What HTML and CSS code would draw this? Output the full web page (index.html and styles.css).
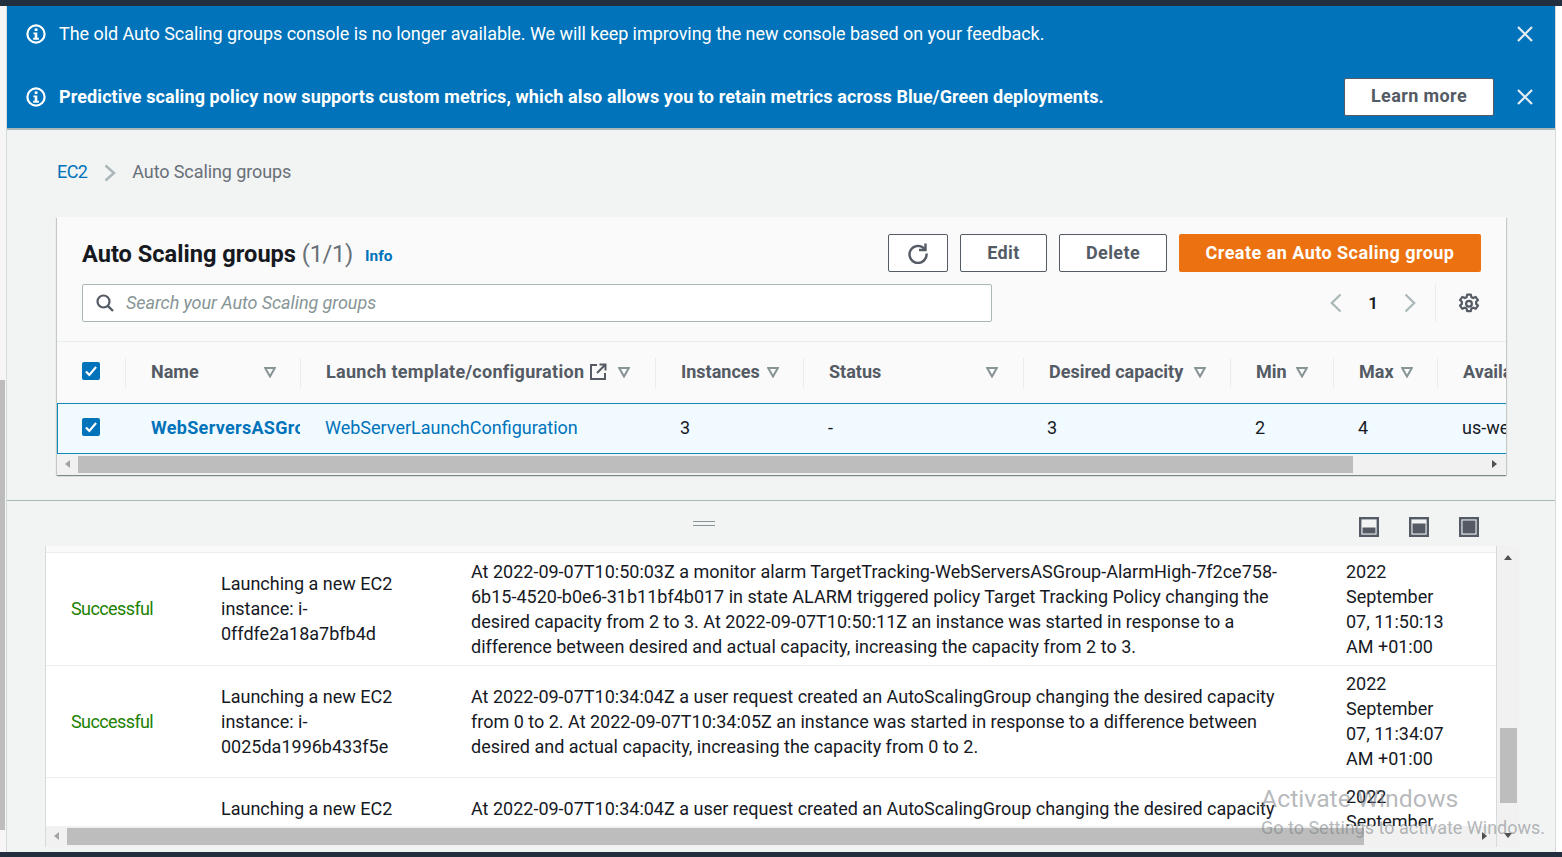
FILE: index.html
```html
<!DOCTYPE html>
<html lang="en">
<head>
<meta charset="utf-8">
<title>Auto Scaling groups</title>
<link rel="stylesheet" href="styles.css">
</head>
<body>
<div class="topbar"></div>
<div class="shell">
  <div class="gutter"><div class="gutter-thumb"></div></div>
  <main class="main">
    <section class="flash">
      <div class="flash-row">
        <svg class="info-icon" viewBox="0 0 20 20"><circle cx="10" cy="10" r="8.6" fill="none" stroke="#fff" stroke-width="2.2"/><rect x="8.7" y="4.4" width="2.8" height="2.6" fill="#fff"/><path d="M7.4 8.4h3.9v5.4h1.6v1.9H7.2v-1.9h1.5v-3.5H7.400z" fill="#fff"/></svg>
        <span class="flash-text">The old Auto Scaling groups console is no longer available. We will keep improving the new console based on your feedback.</span>
        <svg class="close-icon" viewBox="0 0 18 18"><path d="M2 2l14 14M16 2L2 16" stroke="#e6edf2" stroke-width="2.2" fill="none"/></svg>
      </div>
      <div class="flash-row">
        <svg class="info-icon" viewBox="0 0 20 20"><circle cx="10" cy="10" r="8.6" fill="none" stroke="#fff" stroke-width="2.2"/><rect x="8.7" y="4.4" width="2.8" height="2.6" fill="#fff"/><path d="M7.4 8.4h3.9v5.4h1.6v1.9H7.2v-1.9h1.5v-3.5H7.400z" fill="#fff"/></svg>
        <span class="flash-text flash-strong">Predictive scaling policy now supports custom metrics, which also allows you to retain metrics across Blue/Green deployments.</span>
        <button class="learn-btn">Learn more</button>
        <svg class="close-icon" viewBox="0 0 18 18"><path d="M2 2l14 14M16 2L2 16" stroke="#e6edf2" stroke-width="2.2" fill="none"/></svg>
      </div>
    </section>

    <nav class="crumbs">
      <a class="crumb-link">EC2</a>
      <svg class="crumb-sep" viewBox="0 0 12 18"><path d="M1.5 1.5L10 9l-8.500 7.500" fill="none" stroke="#aab7b8" stroke-width="2.400"/></svg>
      <span class="crumb-current">Auto Scaling groups</span>
    </nav>

    <section class="card">
      <div class="card-head">
        <div class="title-row">
          <h1 class="title">Auto Scaling groups <span class="count">(1/1)</span></h1>
          <a class="info-link">Info</a>
          <div class="actions">
            <button class="btn btn-icon"><svg class="refresh" viewBox="0 0 22 22"><path d="M17.600 7A8.500 8.500 0 1 0 19.500 11.500" fill="none" stroke="#545b64" stroke-width="2.400"/><path d="M18.500 1.500V8h-6.500" fill="none" stroke="#545b64" stroke-width="2.400"/></svg></button>
            <button class="btn btn-edit">Edit</button>
            <button class="btn btn-delete">Delete</button>
            <button class="btn-primary">Create an Auto Scaling group</button>
          </div>
        </div>
        <div class="search-row">
          <div class="search">
            <svg class="search-icon" viewBox="0 0 18 18"><circle cx="7.500" cy="7.500" r="6" fill="none" stroke="#545b64" stroke-width="2.200"/><path d="M11.800 11.800L17 17" stroke="#545b64" stroke-width="2.400"/></svg>
            <span class="placeholder">Search your Auto Scaling groups</span>
          </div>
          <div class="pager">
            <svg class="pager-chev" viewBox="0 0 12 20"><path d="M10.500 1.500L1.800 10l8.700 8.500" fill="none" stroke="#aab7b8" stroke-width="2.200"/></svg>
            <span class="page-num">1</span>
            <svg class="pager-chev" viewBox="0 0 12 20"><path d="M1.500 1.500L10.200 10l-8.700 8.500" fill="none" stroke="#aab7b8" stroke-width="2.200"/></svg>
            <span class="pager-divider"></span>
            <svg class="gear" viewBox="0 0 20 20"><path d="M8.300 1.500h3.400l.5 2.300 1.700.8 2.100-1.100 2.200 2.900-1.700 1.600v1.900l1.700 1.600-2.200 2.900-2.100-1.100-1.700.8-.5 2.300H8.300l-.5-2.300-1.700-.8-2.100 1.100-2.200-2.900 1.700-1.600V8l-1.700-1.600 2.200-2.900 2.100 1.100 1.700-.8z" fill="none" stroke="#545b64" stroke-width="2" stroke-linejoin="round"/><circle cx="10" cy="9.800" r="2.600" fill="none" stroke="#545b64" stroke-width="2"/></svg>
          </div>
        </div>
      </div>

      <div class="grid grid-head">
        <div class="cell cell-check"><span class="checkbox"><svg viewBox="0 0 16 16"><path d="M3.500 8.500l3 3 6-7" fill="none" stroke="#fff" stroke-width="2"/></svg></span></div>
        <div class="cell th"><span>Name</span><svg class="caret caret-name" viewBox="0 0 12 11"><path d="M1.200 1h9.600L6 9.500z" fill="none" stroke="#879596" stroke-width="2"/></svg></div>
        <div class="cell th"><span class="th-wide">Launch template/configuration</span><svg class="ext" viewBox="0 0 18 18"><path d="M8 2H2v14h14v-6" fill="none" stroke="#545b64" stroke-width="2"/><path d="M10.500 1.500h6v6M16 2L8 10" fill="none" stroke="#545b64" stroke-width="2"/></svg><svg class="caret caret-gap" viewBox="0 0 12 11"><path d="M1.200 1h9.600L6 9.500z" fill="none" stroke="#879596" stroke-width="2"/></svg></div>
        <div class="cell th"><span>Instances</span><svg class="caret caret-nearest" viewBox="0 0 12 11"><path d="M1.200 1h9.600L6 9.500z" fill="none" stroke="#879596" stroke-width="2"/></svg></div>
        <div class="cell th"><span>Status</span><svg class="caret caret-status" viewBox="0 0 12 11"><path d="M1.200 1h9.600L6 9.500z" fill="none" stroke="#879596" stroke-width="2"/></svg></div>
        <div class="cell th"><span>Desired capacity</span><svg class="caret caret-gap" viewBox="0 0 12 11"><path d="M1.200 1h9.600L6 9.500z" fill="none" stroke="#879596" stroke-width="2"/></svg></div>
        <div class="cell th"><span>Min</span><svg class="caret caret-near" viewBox="0 0 12 11"><path d="M1.200 1h9.600L6 9.500z" fill="none" stroke="#879596" stroke-width="2"/></svg></div>
        <div class="cell th"><span>Max</span><svg class="caret caret-nearest" viewBox="0 0 12 11"><path d="M1.200 1h9.600L6 9.500z" fill="none" stroke="#879596" stroke-width="2"/></svg></div>
        <div class="cell th"><span>Availability Zones</span></div>
      </div>

      <div class="grid grid-row">
        <div class="cell cell-check"><span class="checkbox"><svg viewBox="0 0 16 16"><path d="M3.500 8.500l3 3 6-7" fill="none" stroke="#fff" stroke-width="2"/></svg></span></div>
        <div class="cell td td-name"><a class="name-link">WebServersASGroup</a></div>
        <div class="cell td"><a class="cfg-link">WebServerLaunchConfiguration</a></div>
        <div class="cell td">3</div>
        <div class="cell td">-</div>
        <div class="cell td">3</div>
        <div class="cell td">2</div>
        <div class="cell td">4</div>
        <div class="cell td">us-west-2a</div>
      </div>

      <div class="hscroll">
        <span class="arrow arrow-left"></span>
        <span class="hthumb"></span>
        <span class="arrow arrow-right"></span>
      </div>
    </section>

    <section class="split">
      <div class="split-bar">
        <span class="handle"></span>
        <div class="split-icons">
          <svg class="pane-icon" viewBox="0 0 20 20"><rect x="1.200" y="1.200" width="17.600" height="17.600" fill="none" stroke="#545b64" stroke-width="2.400"/><rect x="3.500" y="10.500" width="13" height="6" fill="#545b64"/></svg>
          <svg class="pane-icon" viewBox="0 0 20 20"><rect x="1.200" y="1.200" width="17.600" height="17.600" fill="none" stroke="#545b64" stroke-width="2.400"/><rect x="3.500" y="6.500" width="13" height="10" fill="#545b64"/></svg>
          <svg class="pane-icon" viewBox="0 0 20 20"><rect x="1.200" y="1.200" width="17.600" height="17.600" fill="none" stroke="#545b64" stroke-width="2.400"/><rect x="3.500" y="3.500" width="13" height="13" fill="#545b64"/></svg>
        </div>
      </div>

      <div class="activity">
        <div class="activity-body">
          <div class="activity-strip"></div>
          <div class="act-row act-row-a">
            <div class="act-status">Successful</div>
            <div class="act-desc">Launching a new EC2<br>instance: i-<br>0ffdfe2a18a7bfb4d</div>
            <div class="act-cause">At 2022-09-07T10:50:03Z a monitor alarm TargetTracking-WebServersASGroup-AlarmHigh-7f2ce758-<br>6b15-4520-b0e6-31b11bf4b017 in state ALARM triggered policy Target Tracking Policy changing the<br>desired capacity from 2 to 3. At 2022-09-07T10:50:11Z an instance was started in response to a<br>difference between desired and actual capacity, increasing the capacity from 2 to 3.</div>
            <div class="act-time">2022<br>September<br>07, 11:50:13<br>AM +01:00</div>
          </div>
          <div class="act-row act-row-b">
            <div class="act-status">Successful</div>
            <div class="act-desc">Launching a new EC2<br>instance: i-<br>0025da1996b433f5e</div>
            <div class="act-cause">At 2022-09-07T10:34:04Z a user request created an AutoScalingGroup changing the desired capacity<br>from 0 to 2. At 2022-09-07T10:34:05Z an instance was started in response to a difference between<br>desired and actual capacity, increasing the capacity from 0 to 2.</div>
            <div class="act-time">2022<br>September<br>07, 11:34:07<br>AM +01:00</div>
          </div>
          <div class="act-row act-row-c">
            <div class="act-status"></div>
            <div class="act-desc">Launching a new EC2</div>
            <div class="act-cause">At 2022-09-07T10:34:04Z a user request created an AutoScalingGroup changing the desired capacity</div>
            <div class="act-time">2022<br>September</div>
          </div>
          <div class="hscroll hscroll-bottom">
            <span class="arrow arrow-left"></span>
            <span class="hthumb hthumb-bottom"></span>
            <span class="arrow arrow-right"></span>
          </div>
        </div>
        <div class="vscroll">
          <span class="v-up"></span>
          <span class="vthumb"></span>
          <span class="v-down"></span>
        </div>
      </div>
    </section>
  </main>
  <div class="right-gutter"></div>
</div>
<div class="bottombar"></div>
<div class="watermark">
  <div class="wm-title">Activate Windows</div>
  <div class="wm-sub">Go to Settings to activate Windows.</div>
</div>
</body>
</html>
```
FILE: styles.css
```css
* { box-sizing: border-box; }
html, body { margin: 0; height: 100%; }
body {
  width: 1562px;
  height: 857px;
  overflow: hidden;
  display: flex;
  flex-direction: column;
  background: #fff;
  font-family: Roboto, "Noto Sans", sans-serif;
  font-size: 18px;
  color: #16191f;
  position: relative;
}
button { font-family: inherit; cursor: pointer; }
.topbar { height: 6px; background: #232f3e; flex: none; }
.bottombar { height: 5px; background: #232f3e; flex: none; }
.shell { flex: 1; display: flex; min-height: 0; }
.gutter { width: 7px; flex: none; background: #f6f6f6; padding-top: 374px; border-right: 1px solid #d5dbdb; }
.gutter-thumb { width: 5px; height: 450px; background: #bdbdbd; }
.right-gutter { width: 6px; flex: none; background: #fff; }
.main { flex: 1; min-width: 0; background: #f2f3f3; display: flex; flex-direction: column; overflow: hidden; border-right: 1px solid #d5dbdb; }

.flash { background: #0073bb; height: 124px; flex: none; color: #fff; border-bottom: 2px solid #aab7b8; }
.flash-row { display: flex; align-items: center; height: 55px; padding: 0 21px 0 19px; }
.flash-row + .flash-row { margin-top: 8px; }
.info-icon { width: 20px; height: 20px; flex: none; margin-right: 13px; }
.flash-text { flex: 1; font-size: 18px; line-height: 25px; white-space: nowrap; letter-spacing: -.055px; }
.flash-strong { font-weight: 700; letter-spacing: .1px; }
.close-icon { width: 18px; height: 18px; flex: none; margin-left: 22px; }
.learn-btn { width: 150px; height: 38px; background: #fff; border: 1px solid #545b64; border-radius: 2px; color: #545b64; font-size: 18px; font-weight: 700; padding: 0 0 2px; flex: none; letter-spacing: .4px; }

.crumbs { display: flex; align-items: center; height: 87px; padding: 0 0 4px 50px; flex: none; }
.crumb-link { color: #0073bb; letter-spacing: -.6px; }
.crumb-sep { width: 12px; height: 18px; margin: 2px 16px 0 17px; }
.crumb-current { color: #687078; letter-spacing: -.1px; }

.card { margin: 0 49px 0 50px; height: 258px; flex: none; background: #fafafa; box-shadow: 0 1px 1px 0 rgba(0,28,36,.3), 1px 1px 1px 0 rgba(0,28,36,.15), -1px 1px 1px 0 rgba(0,28,36,.15); overflow: hidden; }
.card-head { height: 125px; padding: 17px 25px 0; border-bottom: 1px solid #eaeded; }
.title-row { display: flex; align-items: center; height: 38px; }
.title { font-size: 23.600px; font-weight: 700; margin: 2px 0 0; line-height: 38px; white-space: nowrap; }
.count { color: #687078; font-weight: 400; letter-spacing: -.3px; }
.info-link { color: #0073bb; font-size: 15.500px; font-weight: 700; margin: 5px 0 0 12px; }
.actions { margin-left: auto; display: flex; gap: 12px; }
.btn { height: 38px; background: #fff; border: 1px solid #545b64; border-radius: 2px; color: #545b64; font-size: 18px; font-weight: 700; padding: 0 0 2px; display: flex; align-items: center; justify-content: center; letter-spacing: .4px; }
.btn-icon { width: 60px; padding: 0; }
.btn-edit { width: 87px; }
.btn-delete { width: 108px; }
.refresh { width: 22px; height: 22px; }
.btn-primary { width: 302px; height: 38px; background: #ec7211; color: #fff; border: 0; border-radius: 2px; font-size: 18px; font-weight: 700; padding: 0 0 2px; white-space: nowrap; letter-spacing: .46px; }

.search-row { display: flex; align-items: center; margin-top: 12px; height: 38px; }
.search { width: 910px; height: 38px; background: #fff; border: 1px solid #aab7b8; border-radius: 2px; display: flex; align-items: center; padding-left: 13px; }
.search-icon { width: 18px; height: 18px; margin-right: 12px; }
.placeholder { color: #879596; font-style: italic; letter-spacing: -.07px; margin-top: -2px; }
.pager { display: flex; align-items: center; margin-left: auto; height: 38px; }
.pager-chev { width: 12px; height: 20px; }
.page-num { width: 62px; text-align: center; font-weight: 600; font-size: 17px; }
.pager-divider { width: 1px; height: 38px; background: #eaeded; margin: 0 22px 0 19px; }
.gear { width: 22px; height: 22px; margin: 2px 1px 0 0; }

.grid { display: grid; grid-template-columns: 68px 175px 355px 148px 220px 207px 103px 104px 70px; }
.grid-head { height: 61px; align-items: center; }
.grid-row { grid-template-columns: 67px 175px 355px 148px 219px 208px 103px 104px 70px; height: 51px; background: #f1faff; border-top: 1px solid #0f8bb5; border-bottom: 1px solid #0f8bb5; border-left: 1px solid #0f8bb5; align-items: center; }
.cell { min-width: 0; white-space: nowrap; overflow: hidden; }
.cell-check { padding: 0 0 4px 25px; display: flex; }
.grid-row .cell-check { padding: 0 0 3px 24px; }
.checkbox { width: 18px; height: 18px; background: #0073bb; border-radius: 2px; display: flex; }
.checkbox svg { width: 18px; height: 18px; }
.th { height: 30px; border-left: 1px solid #eaeded; padding: 0 0 2px 25px; color: #545b64; font-weight: 700; display: flex; align-items: center; }
.th-wide { letter-spacing: .28px; }
.caret { width: 12px; height: 11px; flex: none; margin-top: 2px; }
.caret-name { margin-left: 65px; }
.caret-gap { margin-left: 11px; }
.caret-near { margin-left: 9px; }
.caret-nearest { margin-left: 7px; }
.caret-status { margin-left: 105px; }
.ext { width: 18px; height: 18px; flex: none; margin-left: 5px; }
.td { padding: 0 0 2px 25px; }
.td-name { padding: 0 0 2px; margin-left: 26px; overflow: hidden; }
.name-link { color: #0073bb; font-weight: 700; letter-spacing: .3px; }
.cfg-link { color: #0073bb; }

.hscroll { height: 21px; background: #f1f1f1; display: flex; align-items: center; position: relative; }
.hthumb { position: absolute; left: 21px; width: 1275px; height: 17px; top: 2px; background: #bdbdbd; }
.arrow { position: absolute; top: 6px; width: 0; height: 0; border-top: 4px solid transparent; border-bottom: 4px solid transparent; }
.arrow-left { left: 8px; border-right: 5px solid #a3a3a3; }
.arrow-right { right: 9px; border-left: 5px solid #505050; }

.split { flex: 1; min-height: 0; margin-top: 25px; padding-bottom: 5px; border-top: 1px solid #aab7b8; display: flex; flex-direction: column; }
.split-bar { height: 45px; flex: none; position: relative; display: flex; justify-content: flex-end; align-items: flex-start; padding: 16px 76px 0 0; }
.handle { position: absolute; left: 686px; top: 20px; width: 22px; height: 5px; border-top: 1px solid #879596; border-bottom: 1px solid #879596; }
.split-icons { display: flex; gap: 30px; }
.pane-icon { width: 20px; height: 20px; }

.activity { flex: 1; min-height: 0; margin: 0 38px; display: flex; border-left: 1px solid #d5dbdb; position: relative; }
.activity-body { width: 1451px; flex: none; background: #fff; border-right: 1px solid #d5dbdb; display: flex; flex-direction: column; position: relative; overflow: hidden; }
.activity-strip { height: 7px; background: #fafafa; border-bottom: 1px solid #eaeded; flex: none; }
.act-row { display: grid; grid-template-columns: 150px 250px 875px 1fr; padding: 0 0 1px 25px; line-height: 25px; align-items: center; flex: none; border-bottom: 1px solid #eaeded; }
.act-row-a { height: 113px; }
.act-row-b { height: 112px; }
.act-row-c { height: 90px; align-items: flex-start; padding-top: 18px; border-bottom: 0; }
.act-row-c .act-time { margin-top: -12px; }
.act-status { color: #1d8102; letter-spacing: -.6px; }
.act-desc, .act-cause, .act-time { white-space: nowrap; }
.hscroll-bottom { position: absolute; left: 0; right: 0; bottom: 0; height: 21px; }
.hthumb-bottom { left: 21px; width: 1297px; }
.vscroll { width: 22px; flex: none; background: #f1f1f1; position: relative; }
.vthumb { position: absolute; left: 3px; top: 182px; width: 17px; height: 75px; background: #bdbdbd; }
.v-up, .v-down { position: absolute; left: 7px; width: 0; height: 0; border-left: 4px solid transparent; border-right: 4px solid transparent; }
.v-up { top: 9px; border-bottom: 5px solid #505050; }
.v-down { bottom: 9px; border-top: 5px solid #505050; }

.watermark { position: absolute; left: 1261px; top: 783px; color: rgba(120,125,130,.55); pointer-events: none; white-space: nowrap; }
.wm-title { font-size: 24.800px; line-height: 32px; }
.wm-sub { font-size: 18px; line-height: 26px; }
```
